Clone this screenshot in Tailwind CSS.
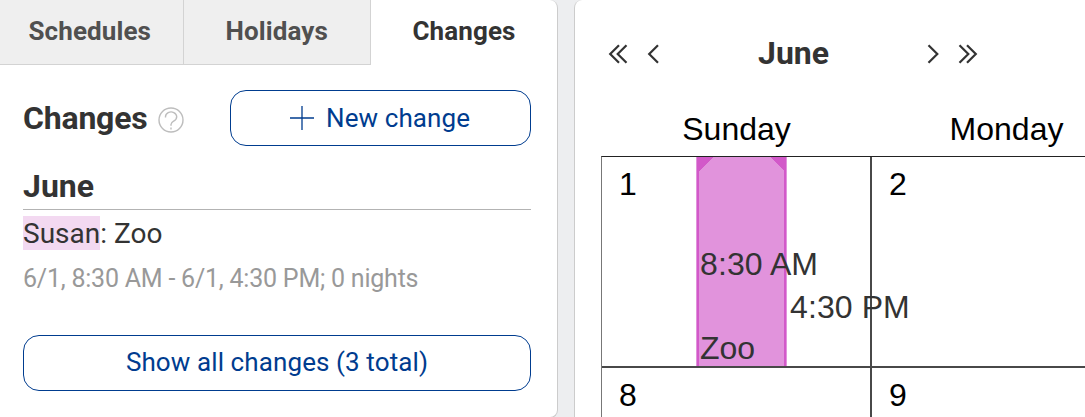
<!DOCTYPE html>
<html lang="en">
<head>
    <meta charset="UTF-8">
    <meta name="viewport" content="width=device-width, initial-scale=1.0">
    <title>Changes</title>
    <script src="https://cdn.jsdelivr.net/npm/@tailwindcss/browser@4"></script>
</head>
<body class="bg-[#edeef0] font-['Roboto',sans-serif] text-[#333]">
    <div class="flex h-[417px] w-[1085px] gap-4 overflow-hidden">
        <!-- Changes panel -->
        <aside class="h-[418px] w-[558px] shrink-0 rounded-r-lg border-r border-b border-[#ccc] bg-white">
            <nav class="flex h-[65px] text-[26px] leading-[62px] font-bold">
                <a href="#schedules" class="w-[184px] border-r border-b border-[#d3d3d3] bg-[#efefef] pl-[28.5px] tracking-[0.1px] text-[#505050]">Schedules</a>
                <a href="#holidays" class="w-[187px] border-r border-b border-[#d3d3d3] bg-[#efefef] pl-[41.5px] tracking-[0.1px] text-[#505050]">Holidays</a>
                <a href="#changes" class="flex-1 pl-[41.5px] tracking-[0.1px]">Changes</a>
            </nav>
            <div class="pt-[25px] pr-[26px] pl-[23px]">
                <div class="flex h-14 items-center">
                    <h2 class="w-[135px] text-[32px] leading-14 font-bold tracking-[-0.2px]">Changes</h2>
                    <svg class="mt-1 size-[26px]" viewBox="0 0 26 26" fill="none" stroke="#bdbdbd" stroke-width="1.4">
                        <circle cx="13" cy="13" r="12" />
                        <path d="M7.500 10.500V9.800a5.600 4.800 0 1 1 8.600 4c-2 1.200-3.100 1.800-3.100 3.700v1.200" />
                        <path d="M13 20.500v2" />
                    </svg>
                    <button class="ml-auto flex h-14 w-[301px] items-center rounded-2xl border border-[#003c8f] pl-[59px] text-[26px] tracking-[0.1px] text-[#003c8f]">
                        <svg class="mr-3 size-6" viewBox="0 0 24 24" stroke="currentColor" stroke-width="1.3">
                            <path d="M12 0v24M0 12h24" />
                        </svg>
                        New change
                    </button>
                </div>
                <h3 class="mt-5 h-[44px] border-b border-[#b3b3b3] text-[32px] leading-[40px] font-bold">June</h3>
                <p class="mt-[6px] text-[28px] leading-[35px]"><span class="inline-block h-[34px] bg-[#f3d9f1]">Susan</span>: Zoo</p>
                <p class="mt-[9px] text-[25px] leading-[38px] tracking-[-0.22px] text-[#999]">6/1, 8:30 AM - 6/1, 4:30 PM; 0 nights</p>
                <button class="mt-[37px] h-14 w-full rounded-2xl border border-[#003c8f] pb-[2px] text-[26px] tracking-[0.1px] text-[#003c8f]">Show all changes (3 total)</button>
            </div>
        </aside>

        <!-- Calendar -->
        <main class="w-[540px] shrink-0 rounded-tl-lg border-l border-[#ccc] bg-white pl-[26px]">
            <header class="flex h-[102px] items-center pl-[7px]">
                <svg class="mt-[5px] h-5 w-[20px]" viewBox="0 0 20 20" fill="none" stroke="#333" stroke-width="2.2">
                    <path d="M11 1.200 2.200 10l8.800 8.800M18.500 1.200 9.700 10l8.800 8.800" />
                </svg>
                <svg class="mt-[5px] ml-[19px] h-5 w-3" viewBox="0 0 12 20" fill="none" stroke="#333" stroke-width="2.2">
                    <path d="M11 1.200 2.200 10l8.800 8.800" />
                </svg>
                <h2 class="w-[268px] pt-[3px] pl-[99px] text-[32px] font-bold">June</h2>
                <svg class="mt-[5px] h-5 w-3" viewBox="0 0 12 20" fill="none" stroke="#333" stroke-width="2.2">
                    <path d="M1.500 1.200l8.800 8.800-8.800 8.800" />
                </svg>
                <svg class="mt-[5px] ml-[19px] h-5 w-5" viewBox="0 0 20 20" fill="none" stroke="#333" stroke-width="2.2">
                    <path d="M1.500 1.200l8.800 8.800-8.800 8.800M9 1.200l8.800 8.800-8.800 8.800" />
                </svg>
            </header>
            <div class="font-['Liberation_Sans',sans-serif] text-[32px] text-black">
                <div class="grid h-[54px] grid-cols-[271px_269px] text-center leading-[54px]">
                    <div>Sunday</div>
                    <div>Monday</div>
                </div>
                <div class="grid grid-cols-[270px_271px] grid-rows-[211px_211px] border-t border-l border-[#777] border-t-[#222] leading-[54px]">
                    <div class="relative border-r-2 border-b-2 border-[#484848] pl-[17px]">
                        1
                        <div class="absolute top-0 left-[94px] h-[209px] w-[91px] text-[#333]">
                            <svg class="block h-full w-full" viewBox="0 0 91 209" shape-rendering="crispEdges">
                                <path fill="#e193dc" d="M0 0h91v209H0z" />
                                <path fill="#d259c9" d="M1 0h16L3 14v195H1zM75 0h15v209h-2V14z" />
                            </svg>
                            <span class="absolute top-[80px] left-[4px] whitespace-nowrap tracking-[0.1px]">8:30 AM</span>
                            <span class="absolute top-[123px] left-[94px] z-10 whitespace-nowrap tracking-[0.1px]">4:30 PM</span>
                            <span class="absolute top-[164px] left-[4px]">Zoo</span>
                        </div>
                    </div>
                    <div class="border-b-2 border-[#484848] pl-[17px]">2</div>
                    <div class="border-r-2 border-[#484848] pl-[17px]">8</div>
                    <div class="pl-[17px]">9</div>
                </div>
            </div>
        </main>
    </div>
</body>
</html>
